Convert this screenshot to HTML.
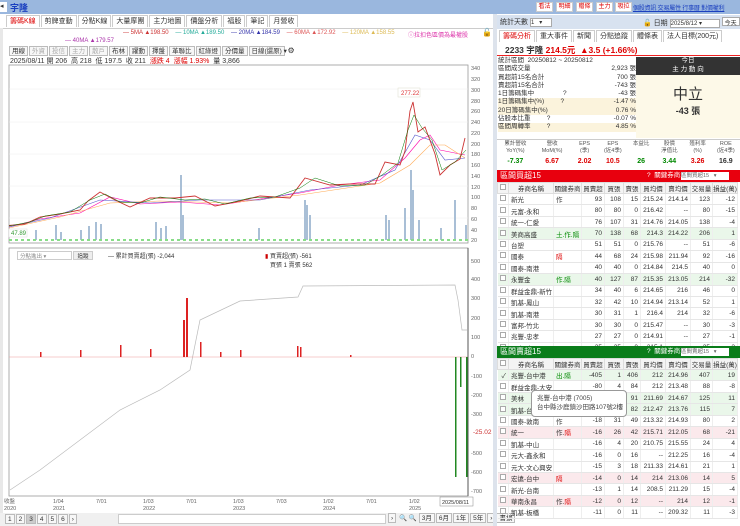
<!DOCTYPE html>
<html><head><meta charset="utf-8">
<style>
*{margin:0;padding:0;box-sizing:border-box}
body{width:740px;height:526px;overflow:hidden;background:#fff;font-family:"Liberation Sans","Noto Sans CJK TC",sans-serif;font-size:7px;color:#333;position:relative}
.a{position:absolute;white-space:nowrap}
.tab{display:inline-block;border:1px solid #ccc;border-bottom:none;padding:0 3px;height:12px;line-height:11px;background:#fff;margin-right:1px;font-size:7px}
.btn{display:inline-block;border:1px solid #bbb;padding:0 2px;height:10px;line-height:9px;background:#f7f7f7;font-size:6.5px;margin-right:1px}
table{border-collapse:collapse;table-layout:fixed;width:240px;font-size:6.5px}
td{height:11.45px;border-bottom:1px solid #e6e6e6;border-right:1px solid #eee;padding:0 2px;text-align:right;overflow:hidden;white-space:nowrap}
td.l{text-align:left}
th{height:11px;font-weight:normal;border:1px solid #ddd;background:#f4f4f4;font-size:6.5px;overflow:hidden;white-space:nowrap}
tr.g td{background:#eaf7ea}
tr.p td{background:#fbe9ec}
.cb{display:inline-block;width:6px;height:6px;border:1px solid #aaa;background:#fff}
.r{color:#d00}.gr{color:#080}
.tb{position:absolute;top:2px;height:10px;background:#fff;color:#d00;border:1px solid #ccc;font-size:6px;line-height:9px;text-align:center}
</style></head><body>
<div class="a" style="left:0;top:0;width:740px;height:14px;background:#9ab7de"></div>
<div class="a" style="left:0;top:2px;width:7px;height:10px;background:#fff;font-size:7px;line-height:10px">◂</div>
<div class="a" style="left:10px;top:1px;font-size:9px;color:#1a3fbf;font-weight:bold">宇隆</div>
<div class="tb" style="left:536px;width:17px">看法</div>
<div class="tb" style="left:556px;width:17px">明細</div>
<div class="tb" style="left:576px;width:17px">贈條</div>
<div class="tb" style="left:596px;width:17px">主力</div>
<div class="tb" style="left:615px;width:17px">吸拉</div>
<div class="a" style="left:633px;top:3px;font-size:6px;color:#1a3fbf;text-decoration:underline;letter-spacing:-0.2px">個股資訊 交易屬性 行事曆 對價權利</div>
<div class="a" style="left:6px;top:15px;height:13px">
<span class="tab" style="color:#d00">籌碼K線</span><span class="tab">剪牌查動</span><span class="tab">分點K線</span><span class="tab">大量摩團</span><span class="tab">主力地圖</span><span class="tab">價盤分析</span><span class="tab">福股</span><span class="tab">筆記</span><span class="tab">月營收</span></div>
<div class="a" style="left:0;top:28px;width:493px;border-top:1px solid #ccc"></div>
<div class="a" style="left:123px;top:30px;font-size:6px"><span style="color:#c33">— 5MA ▲198.50</span>&nbsp;&nbsp;&nbsp;&nbsp;<span style="color:#2a9">— 10MA ▲189.50</span>&nbsp;&nbsp;&nbsp;&nbsp;<span style="color:#33a">— 20MA ▲184.59</span>&nbsp;&nbsp;&nbsp;&nbsp;<span style="color:#d55">— 60MA ▲172.92</span>&nbsp;&nbsp;&nbsp;&nbsp;<span style="color:#db5">— 120MA ▲158.55</span></div>
<div class="a" style="left:65px;top:38px;font-size:6px;color:#a3a">— 40MA ▲179.57</div>
<div class="a" style="left:408px;top:30px;font-size:6px;color:#d3a">ⓘ拉扣色區價為最權股</div>
<div class="a" style="left:482px;top:28px;font-size:8px">🔓</div>
<div class="a" style="left:9px;top:46px">
<span class="btn">用線</span><span class="btn" style="color:#aaa">外資</span><span class="btn" style="color:#aaa">投信</span><span class="btn" style="color:#aaa">主力</span><span class="btn" style="color:#aaa">散戶</span><span class="btn">布林</span><span class="btn">躍動</span><span class="btn">擇盤</span><span class="btn">革聯比</span><span class="btn">紅綠燈</span><span class="btn">分價量</span><span class="btn" style="width:36px">日線(還原) ▾</span> <span style="font-size:8px">⚙</span></div>
<div class="a" style="left:10px;top:56px;font-size:7px">2025/08/11 開 206 &nbsp;高 218 &nbsp;低 197.5 &nbsp;收 211 &nbsp;<span class="r">漲跌 4 &nbsp;漲幅 1.93%</span> &nbsp;量 3,866</div>
<div class="a" style="left:0;top:28px;width:3px;height:485px;background:#e8e8e8"></div>
<svg class="a" style="left:0;top:60px" width="495" height="455" viewBox="0 60 495 455">
<rect x="9" y="65" width="459" height="178" fill="none" stroke="#999" stroke-width="0.8"/>
<g stroke="#eee" stroke-width="0.5">
<line x1="9" x2="468" y1="89" y2="89"/><line x1="9" x2="468" y1="122" y2="122"/><line x1="9" x2="468" y1="154" y2="154"/><line x1="9" x2="468" y1="186" y2="186"/><line x1="9" x2="468" y1="218" y2="218"/></g>
<g fill="#a9bfd6">
<rect x="35" y="230" width="2" height="10"/><rect x="55" y="225" width="2" height="15"/><rect x="60" y="232" width="2" height="8"/><rect x="80" y="230" width="2" height="10"/><rect x="88" y="226" width="2" height="14"/><rect x="95" y="222" width="2" height="18"/><rect x="100" y="224" width="2" height="16"/><rect x="155" y="222" width="2" height="18"/><rect x="160" y="228" width="2" height="12"/><rect x="165" y="226" width="2" height="14"/><rect x="180" y="175" width="2" height="65"/><rect x="182" y="215" width="2" height="25"/><rect x="258" y="228" width="2" height="12"/><rect x="304" y="200" width="2" height="40"/><rect x="306" y="205" width="2" height="35"/><rect x="309" y="215" width="2" height="25"/><rect x="385" y="215" width="2" height="25"/><rect x="388" y="220" width="2" height="20"/><rect x="404" y="208" width="2" height="32"/><rect x="410" y="170" width="2" height="70"/><rect x="412" y="190" width="2" height="50"/><rect x="418" y="220" width="2" height="20"/><rect x="440" y="228" width="2" height="12"/><rect x="454" y="200" width="2" height="40"/><rect x="465" y="225" width="2" height="15"/></g>
<polyline fill="none" stroke="#f0a" stroke-width="0.6" points="9,227 40,219 80,213 110,197 140,204 180,202 220,205 260,199 300,193 340,185 380,180 405,158 420,140 430,135 440,150 465,155"/>
<polyline fill="none" stroke="#fa5" stroke-width="0.6" points="9,228 60,217 110,203 160,201 230,203 300,195 380,183 410,165 430,145 445,145 465,158"/>
<polyline fill="none" stroke="#55c" stroke-width="0.6" points="9,227 50,218 100,200 150,203 200,200 260,200 310,190 360,185 395,170 415,135 430,140 445,160 465,158"/>
<polyline fill="none" stroke="#c33" stroke-width="0.9" points="9,225.5 25,224 40,217 60,214 80,210 88,201 100,192 115,200 130,207 150,198 175,198 195,196 215,206 240,201 260,196 290,198 305,178 330,185 350,184 375,184 385,162 400,165 405,151 410,111 413,102 418,132 425,127 435,154 440,175 450,165 460,159 465,138"/>
<polyline fill="none" stroke="#070" stroke-width="0.5" points="9,226 30,222 45,216 70,212 90,200 105,194 120,202 140,203 160,197 185,200 205,199 225,204 250,198 275,197 300,188 315,178 340,186 365,185 382,175 398,163 408,130 414,115 422,128 432,140 442,170 455,162 466,150"/>
<rect x="398" y="88" width="22" height="9" fill="#fff" stroke="#ddc" stroke-width="0.5"/>
<text x="401" y="95" font-size="6" fill="#d33">277.22</text>
<rect x="9" y="229" width="18" height="8" fill="#fff" stroke="#ddd" stroke-width="0.5"/>
<text x="11" y="235" font-size="6" fill="#393">47.89</text>
<line x1="9" x2="468" y1="240" y2="240" stroke="#8d8" stroke-width="2" stroke-dasharray="3,3"/>
<g font-size="5.5" fill="#666"><text x="471" y="70">340</text><text x="471" y="81">320</text><text x="471" y="92">300</text><text x="471" y="103">280</text><text x="471" y="113">260</text><text x="471" y="124">240</text><text x="471" y="135">220</text><text x="471" y="146">200</text><text x="471" y="156">180</text><text x="471" y="167">160</text><text x="471" y="178">140</text><text x="471" y="189">120</text><text x="471" y="199">100</text><text x="471" y="210">80</text><text x="471" y="221">60</text><text x="471" y="232">40</text><text x="471" y="242">20</text>
<text x="471" y="263">500</text><text x="471" y="281">400</text><text x="471" y="300">300</text><text x="471" y="320">200</text><text x="471" y="339">100</text><text x="471" y="358">0</text><text x="471" y="378">-100</text><text x="471" y="397">-200</text><text x="471" y="416">-300</text><text x="471" y="455">-500</text><text x="471" y="474">-600</text><text x="471" y="493">-700</text></g>
<text x="473" y="434" font-size="6.5" fill="#c33">-25.02</text>
<rect x="9" y="248" width="459" height="248" fill="none" stroke="#999" stroke-width="0.8"/>
<polyline fill="none" stroke="#bbb" stroke-width="0.7" points="10,490 40,470 80,440 120,410 160,390 190,370 200,320 240,301 298,297 303,286 455,285 458,300 462,330 467,330"/>
<line x1="9" x2="468" y1="357" y2="357" stroke="#e99" stroke-width="0.5"/>
<g fill="#d22"><rect x="40" y="352" width="1.5" height="5"/><rect x="80" y="350" width="1.5" height="7"/><rect x="120" y="345" width="1.5" height="12"/><rect x="150" y="349" width="1.5" height="8"/><rect x="183" y="320" width="2" height="37"/><rect x="186" y="298" width="2" height="59"/><rect x="200" y="342" width="1.5" height="15"/><rect x="220" y="352" width="1.5" height="5"/><rect x="240" y="350" width="1.5" height="7"/><rect x="297" y="346" width="1.5" height="11"/><rect x="300" y="347" width="1.5" height="10"/><rect x="350" y="355" width="1.5" height="2"/></g>
<g fill="#282"><rect x="455" y="357" width="1.5" height="120"/><rect x="460" y="357" width="1.5" height="30"/><rect x="466" y="357" width="1.5" height="120"/></g>
<line x1="468" x2="468" y1="248" y2="496" stroke="#555" stroke-width="1"/>
<g font-size="5.5" fill="#666"><text x="4" y="503">收盤</text><text x="4" y="510">2020</text><text x="53" y="503">1/04</text><text x="53" y="510">2021</text><text x="96" y="503">7/01</text><text x="143" y="503">1/03</text><text x="143" y="510">2022</text><text x="186" y="503">7/01</text><text x="233" y="503">1/03</text><text x="233" y="510">2023</text><text x="276" y="503">7/03</text><text x="323" y="503">1/02</text><text x="323" y="510">2024</text><text x="366" y="503">7/01</text><text x="409" y="503">1/02</text><text x="409" y="510">2025</text></g>
<rect x="440" y="497" width="33" height="9" fill="#fff" stroke="#888" stroke-width="0.5"/><text x="442" y="504" font-size="5.5" fill="#333">2025/08/11</text>
</svg>
<div class="a" style="left:17px;top:251px;width:55px;height:9px;border:1px solid #ccc;font-size:5.5px;color:#888;padding-left:2px">分點進出 ▾</div>
<div class="a" style="left:73px;top:251px;width:20px;height:9px;background:#eee;border:1px solid #ccc;font-size:5.5px;text-align:center">追蹤</div>
<div class="a" style="left:108px;top:251px;font-size:6px">— 累計買賣超(張) -2,044</div>
<div class="a" style="left:265px;top:251px;font-size:6px"><span style="color:#c00">▮</span> 買賣超(張) -561<br>&nbsp;&nbsp;&nbsp;買張 1 賣張 562</div>
<div class="a" style="left:0;top:513px;width:495px;height:13px;background:#f0f0f0"></div>
<div class="a" style="left:5px;top:514px;font-size:6.5px"><span class="btn">1</span><span class="btn">2</span><span class="btn" style="background:#ccc">3</span><span class="btn">4</span><span class="btn">5</span><span class="btn">6</span><span class="btn">›</span></div>
<div class="a" style="left:118px;top:514px;width:268px;height:10px;border:1px solid #ccc;background:#fff"></div>
<div class="a" style="left:388px;top:513px;font-size:6.5px"><span class="btn">›</span> 🔍 🔍 <span class="btn">3月</span><span class="btn">6月</span><span class="btn">1年</span><span class="btn">5年</span><span class="btn">›</span><span class="btn">書擴</span></div>
<div class="a" style="left:493px;top:14px;width:4px;height:512px;background:#dde3ec"></div>
<div class="a" style="left:497px;top:15px;width:243px;height:14px;background:#d8e2f0"></div>
<div class="a" style="left:500px;top:17px;font-size:7px">統計天數 <span style="display:inline-block;width:22px;height:9px;background:#fff;border:1px solid #aaa;font-size:6px;vertical-align:middle">1 &nbsp;&nbsp;▾</span></div>
<div class="a" style="left:643px;top:17px;font-size:7px">🔓 日期 <span style="display:inline-block;width:50px;height:9px;background:#fff;border:1px solid #aaa;font-size:6px;vertical-align:middle">2025/8/12 ▾</span> <span style="display:inline-block;height:9px;background:#fff;border:1px solid #aaa;font-size:6px;padding:0 2px">今天</span></div>
<div class="a" style="left:499px;top:30px"><span class="tab" style="color:#d00">籌碼分析</span><span class="tab">重大事件</span><span class="tab">新聞</span><span class="tab">分點追蹤</span><span class="tab">體條表</span><span class="tab">法人目標(200元)</span></div>
<div class="a" style="left:497px;top:42px;width:243px;height:14px;border-bottom:1.5px solid #e22"></div>
<div class="a" style="left:505px;top:44px;font-size:8.5px;font-weight:bold">2233 宇隆 <span class="r">214.5元 &nbsp;▲3.5 (+1.66%)</span></div>
<div class="a" style="left:498px;top:57px;width:138px;font-size:6.5px;line-height:8.3px">
<div>統計區間 &nbsp;20250812 ~ 20250812</div>
<div>區間成交量<span style="float:right">2,923 張</span></div>
<div>買超前15名合計<span style="float:right">700 張</span></div>
<div>賣超前15名合計<span style="float:right">-743 張</span></div>
<div>1日籌碼集中 &nbsp;&nbsp;&nbsp;&nbsp;&nbsp;&nbsp;&nbsp;&nbsp;&nbsp;&nbsp;&nbsp;&nbsp;&nbsp;&nbsp;&nbsp;?<span style="float:right">-43 張</span></div>
<div style="background:#fbf3dc">1日籌碼集中(%) &nbsp;&nbsp;&nbsp;&nbsp;&nbsp;&nbsp;&nbsp;&nbsp;?<span style="float:right">-1.47 %</span></div>
<div style="background:#fbf3dc">20日籌碼集中(%)<span style="float:right">0.76 %</span></div>
<div>佔股本比重 &nbsp;&nbsp;&nbsp;&nbsp;&nbsp;&nbsp;&nbsp;&nbsp;?<span style="float:right">-0.07 %</span></div>
<div style="background:#fbf3dc">區間周轉率 &nbsp;&nbsp;&nbsp;&nbsp;&nbsp;&nbsp;&nbsp;&nbsp;?<span style="float:right">4.85 %</span></div></div>
<div class="a" style="left:636px;top:57px;width:104px;height:18px;background:#333;color:#fff;text-align:center;font-size:6.5px;line-height:8.5px">今日<br>主 力 動 向</div>
<div class="a" style="left:636px;top:75px;width:104px;height:63px;background:#fdf9e8;text-align:center"><div style="font-size:15px;margin-top:8px">中立</div><div style="font-size:9px;font-weight:bold">-43 張</div></div>
<div class="a" style="left:497px;top:139px;width:243px;border-top:1px solid #ccc"></div>
<div class="a" style="left:497px;top:141px;width:243px;font-size:5.5px;color:#555;display:flex;text-align:center;line-height:6.5px">
<div style="flex:1.3">累計營收<br>YoY(%)</div><div style="flex:1.3">營收<br>MoM(%)</div><div style="flex:1">EPS<br>(季)</div><div style="flex:1">EPS<br>(近4季)</div><div style="flex:1">本益比</div><div style="flex:1">股價<br>淨值比</div><div style="flex:1">殖利率<br>(%)</div><div style="flex:1">ROE<br>(近4季)</div></div>
<div class="a" style="left:497px;top:158px;width:243px;font-size:7px;font-weight:bold;display:flex;text-align:center">
<div style="flex:1.3" class="gr">-7.37</div><div style="flex:1.3" class="r">6.67</div><div style="flex:1" class="r">2.02</div><div style="flex:1" class="r">10.5</div><div style="flex:1" class="gr">26</div><div style="flex:1" class="gr">3.44</div><div style="flex:1" class="r">3.26</div><div style="flex:1">16.9</div></div>
<div class="a" style="left:497px;top:170px;width:243px;height:12px;background:#e8000e;color:#fff;font-size:8px;line-height:12px;padding-left:3px">區間買超15<span style="position:absolute;left:150px;font-size:6.5px">? &nbsp;關鍵券商:</span><span style="position:absolute;left:184px;top:2px;width:48px;height:8px;background:#fff;color:#666;font-size:5.5px;line-height:8px">區間買超15 &nbsp;&nbsp;▾</span></div>
<div class="a" style="left:497px;top:182px">
<table><colgroup><col style="width:11px"><col style="width:45px"><col style="width:28px"><col style="width:23px"><col style="width:19px"><col style="width:17px"><col style="width:25px"><col style="width:25px"><col style="width:22px"><col style="width:25px"></colgroup>
<tr><th><span class="cb"></span></th><th>券商名稱</th><th>關鍵券商</th><th>買賣超</th><th>買張</th><th>賣張</th><th>買均價</th><th>賣均價</th><th>交易量</th><th>損益(萬)</th></tr>
<tr><td><span class="cb"></span></td><td class="l">新光</td><td class="l">作</td><td>93</td><td>108</td><td>15</td><td>215.24</td><td>214.14</td><td>123</td><td>-12</td></tr>
<tr><td><span class="cb"></span></td><td class="l">元富-永和</td><td></td><td>80</td><td>80</td><td>0</td><td>216.42</td><td>--</td><td>80</td><td>-15</td></tr>
<tr><td><span class="cb"></span></td><td class="l">統一-仁愛</td><td></td><td>76</td><td>107</td><td>31</td><td>214.76</td><td>214.05</td><td>138</td><td>-4</td></tr>
<tr class="g"><td><span class="cb"></span></td><td class="l">美商高盛</td><td class="l gr">土.作.隔</td><td>70</td><td>138</td><td>68</td><td>214.3</td><td>214.22</td><td>206</td><td>1</td></tr>
<tr><td><span class="cb"></span></td><td class="l">台塑</td><td></td><td>51</td><td>51</td><td>0</td><td>215.76</td><td>--</td><td>51</td><td>-6</td></tr>
<tr><td><span class="cb"></span></td><td class="l">國泰</td><td class="l r">隔</td><td>44</td><td>68</td><td>24</td><td>215.98</td><td>211.94</td><td>92</td><td>-16</td></tr>
<tr><td><span class="cb"></span></td><td class="l">國泰-南港</td><td></td><td>40</td><td>40</td><td>0</td><td>214.84</td><td>214.5</td><td>40</td><td>0</td></tr>
<tr class="g"><td><span class="cb"></span></td><td class="l">永豐金</td><td class="l gr">作.隔</td><td>40</td><td>127</td><td>87</td><td>215.35</td><td>213.05</td><td>214</td><td>-32</td></tr>
<tr><td><span class="cb"></span></td><td class="l">群益金鼎-新竹</td><td></td><td>34</td><td>40</td><td>6</td><td>214.65</td><td>216</td><td>46</td><td>0</td></tr>
<tr><td><span class="cb"></span></td><td class="l">凱基-鳳山</td><td></td><td>32</td><td>42</td><td>10</td><td>214.94</td><td>213.14</td><td>52</td><td>1</td></tr>
<tr><td><span class="cb"></span></td><td class="l">凱基-南港</td><td></td><td>30</td><td>31</td><td>1</td><td>216.4</td><td>214</td><td>32</td><td>-6</td></tr>
<tr><td><span class="cb"></span></td><td class="l">富邦-竹北</td><td></td><td>30</td><td>30</td><td>0</td><td>215.47</td><td>--</td><td>30</td><td>-3</td></tr>
<tr><td><span class="cb"></span></td><td class="l">兆豐-忠孝</td><td></td><td>27</td><td>27</td><td>0</td><td>214.91</td><td>--</td><td>27</td><td>-1</td></tr>
<tr><td><span class="cb"></span></td><td class="l">元大-東門</td><td></td><td>25</td><td>25</td><td>0</td><td>215.1</td><td>--</td><td>25</td><td>-2</td></tr>
</table></div>
<div class="a" style="left:497px;top:346px;width:243px;height:12px;background:#0a7d1a;color:#fff;font-size:8px;line-height:12px;padding-left:3px;overflow:hidden">區間賣超15<span style="position:absolute;left:150px;font-size:6.5px">? &nbsp;關鍵券商:</span><span style="position:absolute;left:184px;top:2px;width:48px;height:8px;background:#fff;color:#666;font-size:5.5px;line-height:8px">區間賣超15 &nbsp;&nbsp;▾</span></div>
<div class="a" style="left:497px;top:358px">
<table><colgroup><col style="width:11px"><col style="width:45px"><col style="width:28px"><col style="width:23px"><col style="width:19px"><col style="width:17px"><col style="width:25px"><col style="width:25px"><col style="width:22px"><col style="width:25px"></colgroup>
<tr><th><span class="cb"></span></th><th>券商名稱</th><th>關鍵券商</th><th>買賣超</th><th>買張</th><th>賣張</th><th>買均價</th><th>賣均價</th><th>交易量</th><th>損益(萬)</th></tr>
<tr class="g"><td>✓</td><td class="l">兆豐-台中港</td><td class="l gr">出.隔</td><td>-405</td><td>1</td><td>406</td><td>212</td><td>214.96</td><td>407</td><td>19</td></tr>
<tr><td><span class="cb"></span></td><td class="l">群益金鼎-大安</td><td></td><td>-80</td><td>4</td><td>84</td><td>212</td><td>213.48</td><td>88</td><td>-8</td></tr>
<tr class="g"><td><span class="cb"></span></td><td class="l">美林</td><td></td><td>-57</td><td>34</td><td>91</td><td>211.69</td><td>214.67</td><td>125</td><td>11</td></tr>
<tr class="g"><td><span class="cb"></span></td><td class="l">凱基-台北</td><td></td><td>-49</td><td>33</td><td>82</td><td>212.47</td><td>213.76</td><td>115</td><td>7</td></tr>
<tr><td><span class="cb"></span></td><td class="l">國泰-敦南</td><td class="l">作</td><td>-18</td><td>31</td><td>49</td><td>213.32</td><td>214.93</td><td>80</td><td>2</td></tr>
<tr class="p"><td><span class="cb"></span></td><td class="l">統一</td><td class="l">作.<span class="r">隔</span></td><td>-16</td><td>26</td><td>42</td><td>215.71</td><td>212.05</td><td>68</td><td>-21</td></tr>
<tr><td><span class="cb"></span></td><td class="l">凱基-中山</td><td></td><td>-16</td><td>4</td><td>20</td><td>210.75</td><td>215.55</td><td>24</td><td>4</td></tr>
<tr><td><span class="cb"></span></td><td class="l">元大-鑫永和</td><td></td><td>-16</td><td>0</td><td>16</td><td>--</td><td>212.25</td><td>16</td><td>-4</td></tr>
<tr><td><span class="cb"></span></td><td class="l">元大-文心興安</td><td></td><td>-15</td><td>3</td><td>18</td><td>211.33</td><td>214.61</td><td>21</td><td>1</td></tr>
<tr class="p"><td><span class="cb"></span></td><td class="l">宏遠-台中</td><td class="l r">隔</td><td>-14</td><td>0</td><td>14</td><td>214</td><td>213.06</td><td>14</td><td>5</td></tr>
<tr><td><span class="cb"></span></td><td class="l">新光-台南</td><td></td><td>-13</td><td>1</td><td>14</td><td>208.5</td><td>211.29</td><td>15</td><td>-4</td></tr>
<tr class="p"><td><span class="cb"></span></td><td class="l">華南永昌</td><td class="l">作.<span class="r">隔</span></td><td>-12</td><td>0</td><td>12</td><td>--</td><td>214</td><td>12</td><td>-1</td></tr>
<tr><td><span class="cb"></span></td><td class="l">凱基-板橋</td><td></td><td>-11</td><td>0</td><td>11</td><td>--</td><td>209.32</td><td>11</td><td>-3</td></tr>
</table></div>
<div class="a" style="left:531px;top:390px;width:96px;height:27px;background:#fff;border:1px solid #999;border-radius:4px;font-size:6.5px;line-height:8.5px;padding:4px 5px;color:#444">兆豐-台中港 (7005)<br>台中縣沙鹿鎮沙田路107號2樓</div>
</body></html>
